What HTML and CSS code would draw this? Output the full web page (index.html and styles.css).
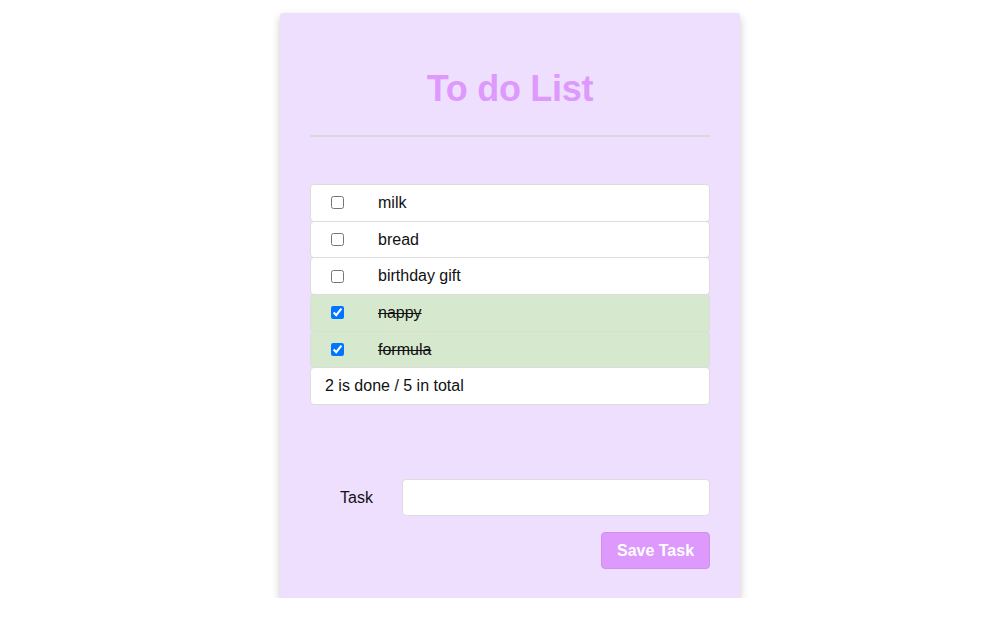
FILE: index.html
```html
<!DOCTYPE html>
<html>
<head>
<meta charset="utf-8">
<link rel="stylesheet" href="styles.css">
</head>
<body>
<div class="card">
  <h1 class="title">To do List</h1>
  <div class="rule"></div>
  <ul class="list">
    <li class="item"><input type="checkbox" class="check"><span class="label">milk</span></li>
    <li class="item"><input type="checkbox" class="check"><span class="label">bread</span></li>
    <li class="item"><input type="checkbox" class="check"><span class="label">birthday gift</span></li>
    <li class="item done"><input type="checkbox" class="check" checked><span class="label">nappy</span></li>
    <li class="item done"><input type="checkbox" class="check" checked><span class="label">formula</span></li>
    <li class="item summary">2 is done / 5 in total</li>
  </ul>
  <form class="form">
    <div class="field">
      <label class="field-label" for="task">Task</label>
      <input id="task" class="field-input" type="text">
    </div>
    <div class="actions">
      <button type="button" class="save">Save Task</button>
    </div>
  </form>
</div>
</body>
</html>
```
FILE: styles.css
```css
html, body {
  margin: 0;
  padding: 0;
  background: #ffffff;
}
body {
  padding-left: 30px;
  font-family: "Liberation Sans", Arial, Helvetica, sans-serif;
  font-size: 16px;
  color: #111;
}
.card {
  box-sizing: border-box;
  width: 460px;
  height: 585px;
  margin: 13px auto 0;
  padding: 58px 30px 29px;
  background: #efdfff;
  border-radius: 3px;
  box-shadow: 0 4px 8px rgba(0, 0, 0, 0.22);
}
.title {
  margin: 0;
  font-size: 36px;
  line-height: 36px;
  font-weight: bold;
  letter-spacing: -0.3px;
  color: #dd99fc;
  text-align: center;
}
.rule {
  height: 2px;
  background: #d9d6dc;
  margin-top: 28px;
}
.list {
  list-style: none;
  margin: 47px 0 0;
  padding: 0;
}
.item {
  box-sizing: border-box;
  height: 37.7px;
  margin-bottom: -1px;
  display: flex;
  align-items: center;
  padding-left: 20px;
  background: #fff;
  border: 1px solid #dcdcdc;
  border-radius: 4px;
}
.item.done {
  background: #d6e9cf;
}
.check {
  width: 13px;
  height: 13px;
  margin: 0;
}
.label {
  margin-left: 34px;
}
.done .label {
  text-decoration: line-through;
}
.summary {
  padding-left: 14px;
}
.form {
  margin-top: 75px;
}
.field {
  display: flex;
  align-items: center;
}
.field-label {
  width: 92px;
  padding-left: 30px;
  box-sizing: border-box;
}
.field-input {
  flex: 1;
  height: 37px;
  box-sizing: border-box;
  border: 1px solid #dcdcdc;
  border-radius: 4px;
  background: #fff;
  font: inherit;
  padding: 0 10px;
}
.actions {
  display: flex;
  justify-content: flex-end;
  margin-top: 16px;
}
.save {
  width: 109px;
  height: 37px;
  border: 1px solid #d18fef;
  border-radius: 4px;
  background: #dd99fc;
  color: #fff;
  font-family: "Liberation Sans", Arial, sans-serif;
  font-size: 16px;
  font-weight: bold;
  padding: 0;
}
```
